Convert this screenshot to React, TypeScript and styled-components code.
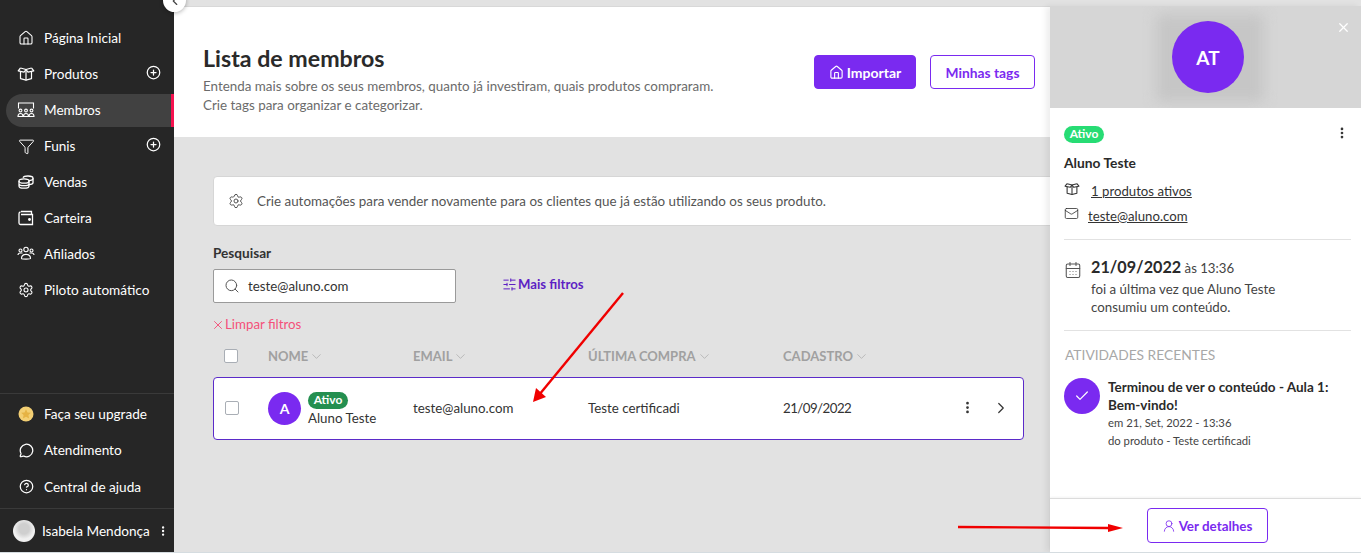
import React from "react"
import styled, { createGlobalStyle } from "styled-components"
import {
    Home, Filter, Settings, MessageCircle, CircleHelp, CirclePlus, ChevronDown, ChevronRight,
    ChevronLeft, MoreVertical, Search, SlidersHorizontal, X, Mail, CalendarDays, Check, UserRound,
} from "lucide-react"

const GlobalStyle = createGlobalStyle`
    html, body {
        margin: 0;
        padding: 0;
        height: 553px;
        overflow: hidden;
        background: #fff;
        font-family: "Lato", "Open Sans", sans-serif;
        color: #2b2b2b;
    }
    * { box-sizing: border-box; }
`

const Page = styled.div`
    display: flex;
    width: 1361px;
    height: 553px;
    position: relative;
    overflow: hidden;
    border-bottom: 1px solid #d5dce0;
`

const Sidebar = styled.aside`
    width: 174px;
    flex: none;
    background: #262626;
    color: #fff;
    display: flex;
    flex-direction: column;
    padding-top: 20px;
    position: relative;
    z-index: 1;
`

const CollapseButton = styled.div`
    position: absolute;
    top: -11px;
    right: -12px;
    width: 23px;
    height: 23px;
    border-radius: 50%;
    background: #fff;
    color: #444;
    display: flex;
    align-items: center;
    justify-content: center;
    box-shadow: 0 1px 4px rgba(0, 0, 0, 0.3);
    z-index: 2;
`

const NavList = styled.nav`
    flex: 1;
    display: flex;
    flex-direction: column;
`

const NavItem = styled.div<{ $active?: boolean }>`
    height: ${({ $active }) => ($active ? "33px" : "36px")};
    margin: ${({ $active }) => ($active ? "1.5px 0 1.5px 6px" : "0 0 0 6px")};
    padding: 0 10px 0 12px;
    display: flex;
    align-items: center;
    gap: 10px;
    font-size: 13.6px;
    border-radius: ${({ $active }) => ($active ? "17px 0 0 17px" : "0")};
    background: ${({ $active }) => ($active ? "#414141" : "transparent")};
    border-right: 3px solid ${({ $active }) => ($active ? "#f5124f" : "transparent")};
`

const IconSlot = styled.span`
    width: 16px;
    height: 18px;
    flex: none;
    display: flex;
    align-items: center;
    justify-content: center;
    svg { flex: none; }
`

const NavLabel = styled.span`
    flex: 1;
    white-space: nowrap;
`

const NavPlus = styled.span`
    display: flex;
    margin-top: -3px;
`

const SideFooter = styled.div`
    border-top: 1px solid #3a3a3a;
    padding: 2px 0 3px;
`

const FooterItem = styled(NavItem)`
    height: 36.5px;
`

const UserRow = styled.div`
    border-top: 1px solid #3a3a3a;
    height: 44px;
    padding: 0 5px 0 13px;
    display: flex;
    align-items: center;
    gap: 7px;
    font-size: 13.6px;
    white-space: nowrap;
`

const UserPhoto = styled.div`
    width: 22px;
    height: 22px;
    border-radius: 50%;
    flex: none;
    background: radial-gradient(circle at 50% 40%, #cfcfcf 0 30%, #f1f1f1 60%, #e8e8e8);
`

const UserName = styled.span`
    flex: 1;
`

const Main = styled.main`
    flex: 1;
    min-width: 0;
    background: #e2e2e2;
    display: flex;
    flex-direction: column;
`

const Header = styled.header`
    background: #fff;
    border-top: 1px solid #d8d8d8;
    margin-top: 6px;
    height: 131px;
    padding: 37px 0 0 29px;
    display: flex;
`

const HeaderText = styled.div`
    width: 611px;
`

const Title = styled.h1`
    margin: 0 0 5px;
    font-size: 23.2px;
    line-height: 28px;
    font-weight: 700;
    color: #2a2a2a;
`

const Sub = styled.p`
    margin: 0;
    font-size: 13.4px;
    line-height: 19px;
    color: #6b6b6b;
`

const HeaderActions = styled.div`
    display: flex;
    gap: 14px;
    padding-top: 11px;
`

const Button = styled.button<{ $solid?: boolean; $w: number; $h: number; $font: number }>`
    width: ${({ $w }) => $w}px;
    height: ${({ $h }) => $h}px;
    border-radius: 4px;
    border: 1.5px solid #7a2af0;
    background: ${({ $solid }) => ($solid ? "#7a2af0" : "#fff")};
    color: ${({ $solid }) => ($solid ? "#fff" : "#7a2af0")};
    font: 700 ${({ $font }) => $font}px "Lato", sans-serif;
    display: flex;
    align-items: center;
    justify-content: center;
    gap: 3px;
    padding: 0;
`

const Content = styled.div`
    padding: 39px 0 0 39px;
    flex: 1;
`

const Notice = styled.div`
    width: 1120px;
    height: 50px;
    background: #fff;
    border: 1px solid #d6d6d6;
    border-radius: 4px;
    display: flex;
    align-items: center;
    padding-left: 14px;
    gap: 13px;
    font-size: 13.4px;
    color: #555;
    white-space: nowrap;
`

const SearchLabel = styled.div`
    margin-top: 19px;
    font-size: 13.6px;
    font-weight: 700;
    line-height: 17px;
    color: #333;
`

const SearchRow = styled.div`
    display: flex;
    align-items: center;
    gap: 46px;
    margin-top: 7px;
`

const SearchBox = styled.div`
    width: 243px;
    height: 34px;
    background: #fff;
    border: 1px solid #9a9a9a;
    border-radius: 2px;
    padding-left: 10px;
    display: flex;
    align-items: center;
    gap: 8px;
    font-size: 13.3px;
    color: #333;
    svg { color: #555; }
`

const MoreFilters = styled.div`
    display: flex;
    align-items: center;
    gap: 1px;
    font-size: 13.2px;
    font-weight: 700;
    color: #5d1fc4;
    margin-top: -4px;
`

const ClearFilters = styled.div`
    display: flex;
    align-items: center;
    margin-top: 13px;
    margin-left: -2px;
    font-size: 13.3px;
    line-height: 17px;
    color: #f4517a;
`

const tableColumns = "44px 145px 175px 195px 1fr"

const TableHead = styled.div`
    display: grid;
    grid-template-columns: ${tableColumns};
    align-items: center;
    width: 811px;
    margin-top: 13px;
    height: 20px;
    padding-left: 11px;
    font-size: 13px;
    font-weight: 700;
    color: #a0a0a0;
`

const HeadCell = styled.div`
    display: flex;
    align-items: center;
    gap: 1px;
`

const Checkbox = styled.div`
    width: 14px;
    height: 14px;
    background: #fff;
    border: 1px solid #a9aeb5;
    border-radius: 2px;
`

const RowCheckbox = styled(Checkbox)`
    margin-left: 1px;
    margin-top: -1px;
`

const Row = styled.div`
    display: grid;
    grid-template-columns: ${tableColumns};
    align-items: center;
    width: 811px;
    height: 63px;
    margin-top: 11px;
    padding-left: 10px;
    background: #fff;
    border: 1px solid #5b2bc9;
    border-radius: 4px;
    font-size: 13.3px;
    line-height: 16px;
    color: #333;
`

const RowText = styled.div`
    margin-top: -2px;
`

const MemberCell = styled.div`
    display: flex;
    align-items: center;
    gap: 7px;
`

const Avatar = styled.div<{ $size: number; $font: number }>`
    width: ${({ $size }) => $size}px;
    height: ${({ $size }) => $size}px;
    border-radius: 50%;
    flex: none;
    background: #7a2af0;
    color: #fff;
    display: flex;
    align-items: center;
    justify-content: center;
    font-size: ${({ $font }) => $font}px;
    font-weight: 700;
`

const MemberText = styled.div`
    display: flex;
    flex-direction: column;
    align-items: flex-start;
    gap: 1px;
    margin-top: 1px;
`

const Badge = styled.span<{ $bright?: boolean }>`
    height: 17px;
    width: 40px;
    border-radius: 9px;
    background: ${({ $bright }) => ($bright ? "#27dc74" : "#248f50")};
    color: #fff;
    font-size: 12px;
    font-weight: 700;
    line-height: 16px;
    text-align: center;
`

const DateCell = styled.div`
    display: flex;
    align-items: center;
    justify-content: space-between;
    padding-right: 13px;
    margin-top: -2px;
    letter-spacing: -0.55px;
    color: #333;
`

const RowActions = styled.div`
    display: flex;
    align-items: center;
    gap: 17px;
`

const Drawer = styled.aside`
    position: absolute;
    top: 6px;
    right: 0;
    bottom: 0;
    width: 311px;
    background: #fff;
    display: flex;
    flex-direction: column;
    box-shadow: -4px 0 6px rgba(0, 0, 0, 0.07);
    z-index: 3;
`

const DrawerTop = styled.div`
    height: 102px;
    flex: none;
    background: #d6d6d6;
    display: flex;
    align-items: center;
    justify-content: center;
    position: relative;
    overflow: hidden;
    &::before {
        content: "";
        position: absolute;
        left: 106px;
        top: 8px;
        width: 108px;
        height: 88px;
        background: #c6c6c6;
        filter: blur(7px);
    }
`

const CloseIcon = styled.div`
    position: absolute;
    top: 14px;
    right: 10px;
    color: #fff;
    display: flex;
`

const TopAvatar = styled(Avatar)`
    position: relative;
    margin-left: 5px;
`

const DrawerBody = styled.div`
    flex: 1;
    padding: 18px 10px 0 14px;
    display: flex;
    flex-direction: column;
`

const BadgeLine = styled.div`
    display: flex;
    justify-content: space-between;
    align-items: flex-start;
    padding-right: 2px;
    color: #333;
`

const DrawerName = styled.div`
    margin-top: 11px;
    font-size: 13.8px;
    font-weight: 700;
    line-height: 18px;
    color: #2a2a2a;
`

const LinkRow = styled.div<{ $gap: number }>`
    display: flex;
    align-items: center;
    gap: ${({ $gap }) => $gap}px;
    height: 25px;
    font-size: 13.2px;
    color: #333;
    text-decoration: underline;
    margin-top: ${({ $gap }) => ($gap > 9 ? "6px" : "0")};
    svg { flex: none; margin-top: -4px; }
`

const Divider = styled.div<{ $top?: number }>`
    height: 1px;
    margin-top: ${({ $top }) => $top ?? 0}px;
    background: #e2e2e2;
    flex: none;
`

const LastSeen = styled.div`
    display: flex;
    gap: 9px;
    padding: 15px 0 14px;
    svg { margin-top: 6px; color: #555; flex: none; }
`

const DateLine = styled.div`
    font-size: 13.2px;
    line-height: 23px;
    color: #444;
    b {
        font-size: 16.2px;
        color: #2a2a2a;
    }
`

const LastSeenText = styled.div`
    font-size: 13.3px;
    line-height: 18px;
    color: #444;
`

const SectionTitle = styled.div`
    margin: 15px 0 0 1px;
    font-size: 13.8px;
    line-height: 18px;
    color: #a8a8a8;
`

const Activity = styled.div`
    display: flex;
    gap: 8px;
    margin-top: 14px;
`

const ActivityTitle = styled.div`
    font-size: 13.5px;
    font-weight: 700;
    line-height: 18px;
    color: #2a2a2a;
`

const ActivityMeta = styled.div`
    font-size: 11.3px;
    line-height: 18px;
    color: #444;
`

const DrawerFooter = styled.div`
    height: 54px;
    flex: none;
    border-top: 1px solid #dcdcdc;
    box-shadow: 0 -1px 2px rgba(0, 0, 0, 0.05);
    display: flex;
    justify-content: center;
    padding: 9px 0 0 3px;
`

const Annotation = styled.svg`
    position: absolute;
    left: 0;
    top: 0;
    z-index: 5;
    pointer-events: none;
`

const BoxIcon = ({ size = 18 }: { size?: number }) => (
    <svg width={size} height={size} viewBox="0 0 18 18" fill="none" stroke="currentColor" strokeWidth="1.2" strokeLinejoin="round">
        <path d="M3.500 6.500v7.200l5.500 1.500 5.500-1.500V6.500" />
        <path d="M3.500 3 9 4.500 14.500 3M9 4.500v10.700" />
        <path d="M3.500 3 1.200 5.800l5.800 1.300L9 4.500l2 2.600 5.800-1.300L14.500 3" />
    </svg>
)

const MembersIcon = () => (
    <svg width="18" height="18" viewBox="0 0 18 18" fill="none" stroke="currentColor" strokeWidth="1.1">
        <path d="M1.500 7.500V2h15v5.500" />
        <circle cx="3.500" cy="9.500" r="1.400" />
        <circle cx="9" cy="9.500" r="1.400" />
        <circle cx="14.500" cy="9.500" r="1.400" />
        <path d="M1 15.500c0-4 5-4 5 0zM6.500 15.500c0-4 5-4 5 0zM12 15.500c0-4 5-4 5 0z" />
    </svg>
)

const AffiliatesIcon = () => (
    <svg width="18" height="18" viewBox="0 0 18 18" fill="none" stroke="currentColor" strokeWidth="1.1">
        <circle cx="9" cy="4.500" r="2.200" />
        <circle cx="3.500" cy="5.500" r="1.500" />
        <circle cx="14.500" cy="5.500" r="1.500" />
        <path d="M1 10c0-1.500 1-2 2.500-2h2M17 10c0-1.500-1-2-2.500-2h-2M4.500 13.500c0-5.500 9-5.500 9 0 0 .8-9 .8-9 0z" />
    </svg>
)

const SalesIcon = () => (
    <svg width="18" height="18" viewBox="0 0 18 18" fill="none" stroke="currentColor" strokeWidth="1.300">
        <ellipse cx="7" cy="8" rx="5" ry="2.200" />
        <path d="M2 8v5c0 1.200 2.200 2.200 5 2.200s5-1 5-2.200V8M2 10.500c0 1.200 2.200 2.200 5 2.200s5-1 5-2.200" />
        <path d="M6 4.800C6.500 3.500 8.500 3 11 3c2.800 0 5 .9 5 2.200v4.500c0 .9-1.400 1.700-4 2" />
        <path d="M11.500 7.600c2.500-.1 4.500-1 4.500-2.400" />
    </svg>
)

const WalletIcon = () => (
    <svg width="16" height="16" viewBox="0 0 16 16" fill="none" stroke="currentColor" strokeWidth="1.300">
        <path d="M3 1.500h10.500v3M2.500 1.800C1.500 2 1 2.800 1 3.800V13c0 1 .7 1.500 1.500 1.500h12V4.500H3" />
        <circle cx="11.500" cy="9.500" r="0.800" fill="currentColor" />
    </svg>
)

const UpgradeIcon = () => (
    <svg width="16" height="16" viewBox="0 0 16 16">
        <circle cx="8" cy="8" r="7.500" fill="#f3cf73" />
        <path d="M8 3.200 9.500 6.400l3.400.4-2.500 2.300.7 3.400L8 10.800l-3.100 1.700.7-3.400-2.500-2.300 3.400-.4z" fill="#e6b344" />
    </svg>
)

const navItems = [
    { label: "Página Inicial", icon: <Home size={16} strokeWidth={1.6} /> },
    { label: "Produtos", icon: <BoxIcon />, plus: true },
    { label: "Membros", icon: <MembersIcon />, active: true },
    { label: "Funis", icon: <Filter size={17} strokeWidth={1.4} />, plus: true },
    { label: "Vendas", icon: <SalesIcon /> },
    { label: "Carteira", icon: <WalletIcon /> },
    { label: "Afiliados", icon: <AffiliatesIcon /> },
    { label: "Piloto automático", icon: <Settings size={16} strokeWidth={1.6} /> },
]

const columns = ["NOME", "EMAIL", "ÚLTIMA COMPRA", "CADASTRO"]

export default function App() {
    return (
        <>
            <GlobalStyle />
            <Page>
                <Sidebar>
                    <NavList>
                        {navItems.map((item) => (
                            <NavItem key={item.label} $active={item.active}>
                                <IconSlot>{item.icon}</IconSlot>
                                <NavLabel>{item.label}</NavLabel>
                                {item.plus && <NavPlus><CirclePlus size={15} strokeWidth={2} /></NavPlus>}
                            </NavItem>
                        ))}
                    </NavList>
                    <SideFooter>
                        <FooterItem>
                            <IconSlot><UpgradeIcon /></IconSlot>
                            <NavLabel>Faça seu upgrade</NavLabel>
                        </FooterItem>
                        <FooterItem>
                            <IconSlot><MessageCircle size={15} strokeWidth={2} /></IconSlot>
                            <NavLabel>Atendimento</NavLabel>
                        </FooterItem>
                        <FooterItem>
                            <IconSlot><CircleHelp size={15} strokeWidth={2} /></IconSlot>
                            <NavLabel>Central de ajuda</NavLabel>
                        </FooterItem>
                    </SideFooter>
                    <UserRow>
                        <UserPhoto />
                        <UserName>Isabela Mendonça</UserName>
                        <MoreVertical size={14} strokeWidth={2.6} />
                    </UserRow>
                    <CollapseButton><ChevronLeft size={14} /></CollapseButton>
                </Sidebar>
                <Main>
                    <Header>
                        <HeaderText>
                            <Title>Lista de membros</Title>
                            <Sub>Entenda mais sobre os seus membros, quanto já investiram, quais produtos compraram.</Sub>
                            <Sub>Crie tags para organizar e categorizar.</Sub>
                        </HeaderText>
                        <HeaderActions>
                            <Button $solid $w={102} $h={34} $font={14}><Home size={15} strokeWidth={1.8} />Importar</Button>
                            <Button $w={105} $h={34} $font={13.8}>Minhas tags</Button>
                        </HeaderActions>
                    </Header>
                    <Content>
                        <Notice>
                            <Settings size={16} strokeWidth={1.5} />
                            Crie automações para vender novamente para os clientes que já estão utilizando os seus produto.
                        </Notice>
                        <SearchLabel>Pesquisar</SearchLabel>
                        <SearchRow>
                            <SearchBox>
                                <Search size={16} strokeWidth={1.5} />
                                teste@aluno.com
                            </SearchBox>
                            <MoreFilters>
                                <SlidersHorizontal size={15} strokeWidth={1.6} />
                                Mais filtros
                            </MoreFilters>
                        </SearchRow>
                        <ClearFilters><X size={14} strokeWidth={1.6} />Limpar filtros</ClearFilters>
                        <TableHead>
                            <Checkbox />
                            {columns.map((col) => (
                                <HeadCell key={col}>{col}<ChevronDown size={15} strokeWidth={1} /></HeadCell>
                            ))}
                        </TableHead>
                        <Row>
                            <RowCheckbox />
                            <MemberCell>
                                <Avatar $size={33} $font={14}>A</Avatar>
                                <MemberText>
                                    <Badge>Ativo</Badge>
                                    Aluno Teste
                                </MemberText>
                            </MemberCell>
                            <RowText>teste@aluno.com</RowText>
                            <RowText>Teste certificadi</RowText>
                            <DateCell>
                                21/09/2022
                                <RowActions>
                                    <MoreVertical size={15} strokeWidth={2.4} />
                                    <ChevronRight size={18} strokeWidth={1.6} />
                                </RowActions>
                            </DateCell>
                        </Row>
                    </Content>
                </Main>
                <Drawer>
                    <DrawerTop>
                        <TopAvatar $size={72} $font={19}>AT</TopAvatar>
                        <CloseIcon><X size={15} strokeWidth={2} /></CloseIcon>
                    </DrawerTop>
                    <DrawerBody>
                        <BadgeLine>
                            <Badge $bright>Ativo</Badge>
                            <MoreVertical size={14} strokeWidth={2.6} />
                        </BadgeLine>
                        <DrawerName>Aluno Teste</DrawerName>
                        <LinkRow $gap={11}><BoxIcon size={16} />1 produtos ativos</LinkRow>
                        <LinkRow $gap={9}><Mail size={15} strokeWidth={1.3} />teste@aluno.com</LinkRow>
                        <Divider $top={11} />
                        <LastSeen>
                            <CalendarDays size={18} strokeWidth={1.4} />
                            <div>
                                <DateLine><b>21/09/2022</b> às 13:36</DateLine>
                                <LastSeenText>foi a última vez que Aluno Teste<br />consumiu um conteúdo.</LastSeenText>
                            </div>
                        </LastSeen>
                        <Divider />
                        <SectionTitle>ATIVIDADES RECENTES</SectionTitle>
                        <Activity>
                            <Avatar $size={36} $font={14}><Check size={16} strokeWidth={1.8} /></Avatar>
                            <div>
                                <ActivityTitle>Terminou de ver o conteúdo - Aula 1:<br />Bem-vindo!</ActivityTitle>
                                <ActivityMeta>em 21, Set, 2022 - 13:36</ActivityMeta>
                                <ActivityMeta>do produto - Teste certificadi</ActivityMeta>
                            </div>
                        </Activity>
                    </DrawerBody>
                    <DrawerFooter>
                        <Button $w={121} $h={35} $font={13.4}><UserRound size={14} strokeWidth={1.4} />Ver detalhes</Button>
                    </DrawerFooter>
                </Drawer>
                <Annotation width="1361" height="553" viewBox="0 0 1361 553">
                    <path d="M623 293 539 395" stroke="#f00000" strokeWidth="2.400" fill="none" />
                    <path d="M533 402 536 388 546 397z" fill="#f00000" />
                    <path d="M958 527 1108 528" stroke="#f00000" strokeWidth="2.400" fill="none" />
                    <path d="M1123 528 1108 524v8z" fill="#f00000" />
                </Annotation>
            </Page>
        </>
    )
}
